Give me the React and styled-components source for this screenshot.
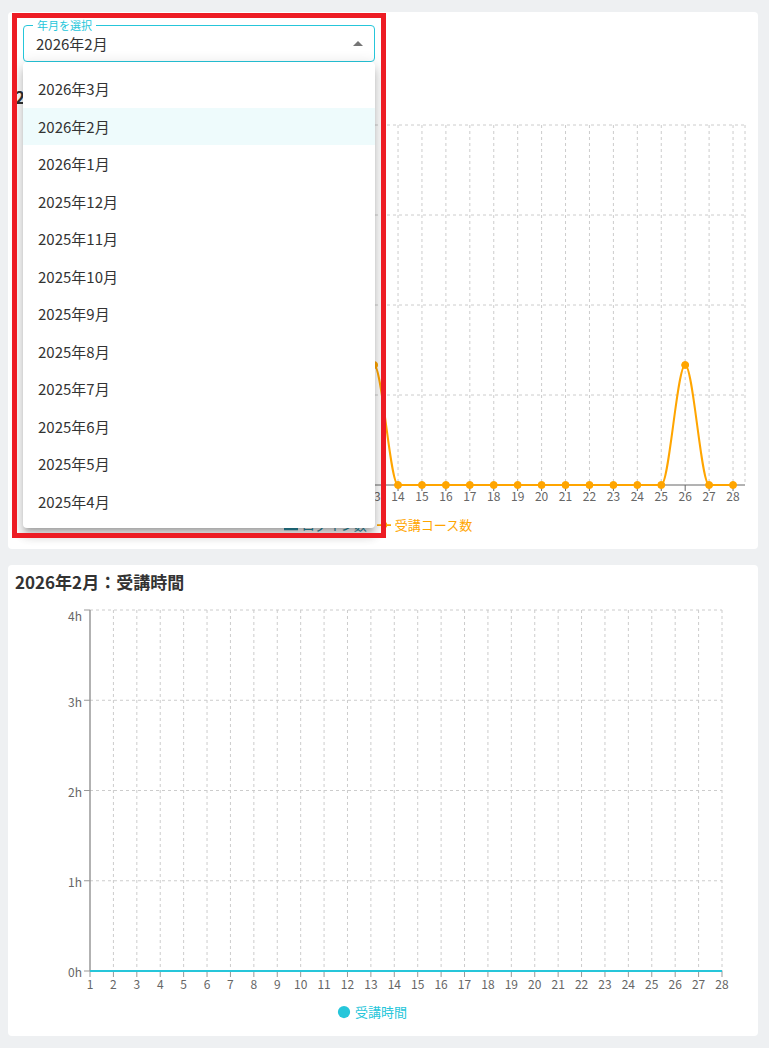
import React from "react";
import styled, { createGlobalStyle } from "styled-components";

const GlobalStyle = createGlobalStyle`
  body {
    margin: 0;
    background: #eef0f2;
    font-family: "Noto Sans CJK JP", "Noto Sans", sans-serif;
    color: #333;
  }
`;

const Page = styled.div`
  display: flex;
  flex-direction: column;
  gap: 16px;
  padding: 12px 11px 12px 8px;
`;

const Card = styled.section`
  position: relative;
  box-sizing: border-box;
  background: #fff;
  border-radius: 4px;
  height: ${(p) => p.$h}px;
  padding-top: ${(p) => p.$pt}px;
`;

const Select = styled.div`
  position: relative;
  box-sizing: border-box;
  margin-left: 15px;
  width: 352px;
  height: 37px;
  border: 1px solid #26c6da;
  border-radius: 4px;
  display: flex;
  align-items: center;
  justify-content: space-between;
  padding: 0 11px 0 12px;
  font-size: 15px;
  color: #333;
`;

const SelectLabel = styled.span`
  position: absolute;
  top: -8px;
  left: 9px;
  padding: 0 4px;
  background: #fff;
  font-size: 11px;
  line-height: 14px;
  color: #26c6da;
`;

const Title = styled.h2`
  margin: ${(p) => p.$mt}px 0 0 7px;
  font-size: 17px;
  line-height: 24px;
  font-weight: 700;
  color: #333;
`;

const ChartSvg = styled.svg`
  display: block;
  font-family: "Noto Sans CJK JP", "Noto Sans", sans-serif;
`;

const Legend = styled.ul`
  list-style: none;
  margin: ${(p) => p.$mt}px 0 0;
  padding: 0 ${(p) => p.$shift}px 0 0;
  display: flex;
  justify-content: center;
  font-size: 13px;
  line-height: 20px;
`;

const LegendItem = styled.li`
  display: flex;
  align-items: center;
  margin-right: 10px;
  color: ${(p) => p.$color};
  svg {
    margin-right: 4px;
  }
`;

const Menu = styled.ul`
  position: absolute;
  left: 15px;
  top: 50px;
  width: 352px;
  box-sizing: border-box;
  margin: 0;
  padding: 8px 0;
  list-style: none;
  background: #fff;
  border-radius: 4px;
  box-shadow: 0px 5px 5px -3px rgba(0, 0, 0, 0.2), 0px 8px 10px 1px rgba(0, 0, 0, 0.14),
    0px 3px 14px 2px rgba(0, 0, 0, 0.12);
  z-index: 2;
`;

const MenuItem = styled.li`
  height: 37.5px;
  display: flex;
  align-items: center;
  padding: 0 15px;
  font-size: 15px;
  color: #333;
  background: ${(p) => (p.$selected ? "rgba(38, 198, 218, 0.08)" : "transparent")};
`;

const Highlight = styled.div`
  position: absolute;
  left: 4px;
  top: 1px;
  width: 374px;
  height: 525px;
  box-sizing: border-box;
  border: 5px solid #ed1c24;
  z-index: 3;
  pointer-events: none;
`;

const ORANGE = "#ffa500";
const CYAN = "#26c6da";
const TEAL = "#2a8fa6";
const days = Array.from({ length: 28 }, (_, i) => i + 1);
const months = [
  "2026年3月", "2026年2月", "2026年1月", "2025年12月", "2025年11月", "2025年10月",
  "2025年9月", "2025年8月", "2025年7月", "2025年6月", "2025年5月", "2025年4月",
];

function monotonePath(pts) {
  let d = `M${pts[0][0]},${pts[0][1]}`;
  for (let i = 1; i < pts.length; i++) {
    const [x0, y0] = pts[i - 1];
    const [x1, y1] = pts[i];
    const dx = (x1 - x0) / 3;
    d += `C${x0 + dx},${y0} ${x1 - dx},${y1} ${x1},${y1}`;
  }
  return d;
}

function TopChart() {
  const L = 67, R = 737, T = 16, B = 376;
  const band = (R - L) / 28;
  const x = (d) => L + (d - 0.5) * band;
  const courses = { 13: 1, 26: 1 };
  const y = (v) => B - v * 120;
  const pts = days.map((d) => [x(d), y(courses[d] || 0)]);
  return (
    <ChartSvg width="750" height="403">
      <g stroke="#ccc" strokeDasharray="3 3">
        {[T, 106, 196, 286].map((gy) => (
          <line key={gy} x1={L} x2={R} y1={gy} y2={gy} />
        ))}
        {days.map((d) => (
          <line key={d} x1={x(d)} x2={x(d)} y1={T} y2={B} />
        ))}
        <line x1={R} x2={R} y1={T} y2={B} />
      </g>
      <g stroke="#666">
        <line x1={L} x2={L} y1={T} y2={B} />
        <line x1={L} x2={R} y1={B} y2={B} />
        {days.map((d) => (
          <line key={d} x1={x(d)} x2={x(d)} y1={B} y2={B + 6} />
        ))}
      </g>
      <g fill="#666" fontSize="12" textAnchor="middle">
        {days.slice(12).map((d) => (
          <text key={d} x={x(d)} y={392}>{d}</text>
        ))}
      </g>
      <path d={monotonePath(pts)} fill="none" stroke={ORANGE} strokeWidth="2" />
      {pts.map(([px, py], i) => (
        <circle key={i} cx={px} cy={py} r="3.5" fill={ORANGE} stroke={ORANGE} strokeWidth="1" />
      ))}
    </ChartSvg>
  );
}

function BottomChart() {
  const L = 82, R = 714, T = 16, B = 377;
  const step = (R - L) / 27;
  const x = (d) => L + (d - 1) * step;
  const ticks = [
    { label: "4h", y: T, ty: 27 },
    { label: "3h", y: 106.25, ty: 113 },
    { label: "2h", y: 196.5, ty: 203 },
    { label: "1h", y: 286.75, ty: 293 },
    { label: "0h", y: B, ty: 383 },
  ];
  return (
    <ChartSvg width="750" height="405">
      <g stroke="#ccc" strokeDasharray="3 3">
        {ticks.slice(0, 4).map((t) => (
          <line key={t.label} x1={L} x2={R} y1={t.y} y2={t.y} />
        ))}
        {days.slice(1).map((d) => (
          <line key={d} x1={x(d)} x2={x(d)} y1={T} y2={B} />
        ))}
      </g>
      <g stroke="#999">
        <line x1={L} x2={L} y1={T} y2={B} strokeWidth="1.5" />
        {ticks.map((t) => (
          <line key={t.label} x1={L - 6} x2={L} y1={t.y} y2={t.y} />
        ))}
        {days.map((d) => (
          <line key={d} x1={x(d)} x2={x(d)} y1={B} y2={B + 6} />
        ))}
      </g>
      <g fill="#666" fontSize="12" textAnchor="end">
        {ticks.map((t) => (
          <text key={t.label} x={L - 8} y={t.ty}>{t.label}</text>
        ))}
      </g>
      <g fill="#666" fontSize="12" textAnchor="middle">
        {days.map((d) => (
          <text key={d} x={x(d)} y={395}>{d}</text>
        ))}
      </g>
      <line x1={L} x2={R} y1={B} y2={B} stroke={CYAN} strokeWidth="2" />
    </ChartSvg>
  );
}

const SquareIcon = ({ color }) => (
  <svg width="14" height="14" viewBox="0 0 32 32">
    <path d="M0,4h32v24h-32z" fill={color} />
  </svg>
);

const LineIcon = ({ color }) => (
  <svg width="14" height="14" viewBox="0 0 32 32">
    <path
      d="M0,16h10.667A5.333,5.333,0,1,1,21.333,16H32M21.333,16A5.333,5.333,0,1,1,10.667,16"
      fill="none"
      stroke={color}
      strokeWidth="4"
    />
  </svg>
);

const CircleIcon = ({ color }) => (
  <svg width="14" height="14" viewBox="0 0 32 32">
    <circle cx="16" cy="16" r="14" fill={color} />
  </svg>
);

export default function App() {
  return (
    <>
      <GlobalStyle />
      <Page>
        <Card $h={537} $pt={13}>
          <Select>
            <SelectLabel>年月を選択</SelectLabel>
            <span>2026年2月</span>
            <svg width="10" height="5" viewBox="0 0 10 5">
              <path d="M0 5L5 0L10 5z" fill="#757575" />
            </svg>
          </Select>
          <Title $mt={23}>2026年2月：ログイン数・受講コース数</Title>
          <TopChart />
          <Legend $mt={3} $shift={0}>
            <LegendItem $color={TEAL}>
              <SquareIcon color={TEAL} />
              ログイン数
            </LegendItem>
            <LegendItem $color={ORANGE}>
              <LineIcon color={ORANGE} />
              受講コース数
            </LegendItem>
          </Legend>
          <Menu>
            {months.map((m, i) => (
              <MenuItem key={m} $selected={i === 1}>{m}</MenuItem>
            ))}
          </Menu>
          <Highlight />
        </Card>
        <Card $h={471} $pt={5}>
          <Title $mt={0}>2026年2月：受講時間</Title>
          <BottomChart />
          <Legend $mt={3} $shift={12}>
            <LegendItem $color={CYAN}>
              <CircleIcon color={CYAN} />
              受講時間
            </LegendItem>
          </Legend>
        </Card>
      </Page>
    </>
  );
}
